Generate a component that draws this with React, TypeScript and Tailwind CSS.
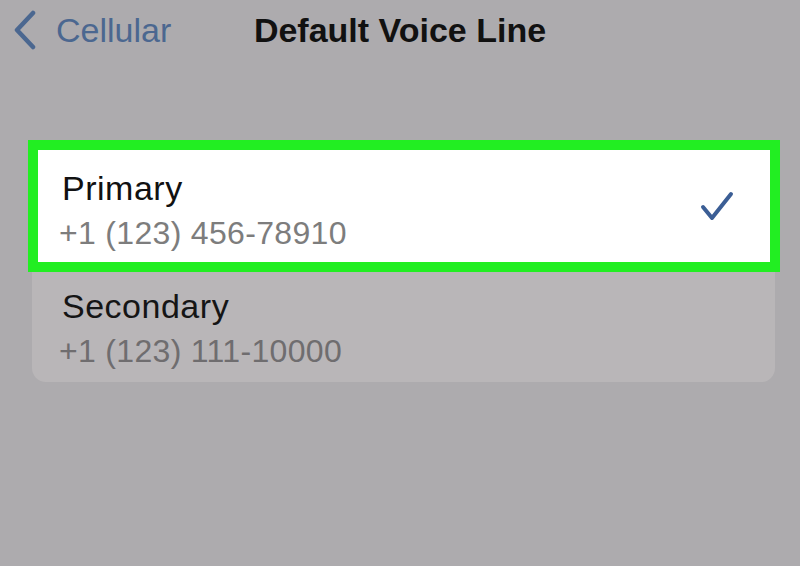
import React from 'react';

const font = { fontFamily: '"Liberation Sans", Arial, sans-serif' };

const BackChevron = () => (
  <svg width="26" height="40" viewBox="0 0 26 40" fill="none">
    <path d="M21 3 L5 20 L21 37" stroke="#4b6790" strokeWidth="4.5" strokeLinecap="round" strokeLinejoin="round" />
  </svg>
);

const Check = () => (
  <svg width="34" height="34" viewBox="0 0 34 34" fill="none">
    <path d="M3 18 L12 29 L31 5" stroke="#3b5e95" strokeWidth="4" strokeLinecap="round" strokeLinejoin="round" />
  </svg>
);

export default function App() {
  return (
    <div className="w-[800px] h-[566px] bg-[#adabae] overflow-hidden" style={font}>
      {/* nav bar */}
      <div className="relative h-[66px] flex items-start">
        <div className="flex items-center pl-[12px] pt-[10px] gap-[18px]">
          <BackChevron />
          <span className="text-[34px] leading-[40px] text-[#4b6790]">Cellular</span>
        </div>
        <div className="absolute left-0 right-0 top-[10px] text-center text-[34px] leading-[40px] font-bold text-[#111111]">
          Default Voice Line
        </div>
      </div>

      {/* options */}
      <div className="pt-[74px] px-[28px] pr-[20px]">
        <div className="border-[10px] border-[#22ee22] bg-white h-[132px] flex items-start justify-between pl-[21px] pr-[36px]">
          <div className="pt-[16px]">
            <div className="text-[34px] leading-[45px] tracking-[0.015em] text-[#111111] pl-[3px]">Primary</div>
            <div className="text-[32px] leading-[45px] tracking-[0.01em] text-[#7d7d7d]">+1 (123) 456-78910</div>
          </div>
          <div className="self-center">
            <Check />
          </div>
        </div>
        <div className="mx-[4px] mr-[5px] bg-[#b9b6b8] rounded-b-[14px] h-[110px] pl-[27px] pt-[12px]">
          <div className="text-[34px] leading-[45px] tracking-[0.015em] text-[#151515] pl-[3px]">Secondary</div>
          <div className="text-[32px] leading-[45px] tracking-[0.01em] text-[#6f6d6f]">+1 (123) 111-10000</div>
        </div>
      </div>
    </div>
  );
}
